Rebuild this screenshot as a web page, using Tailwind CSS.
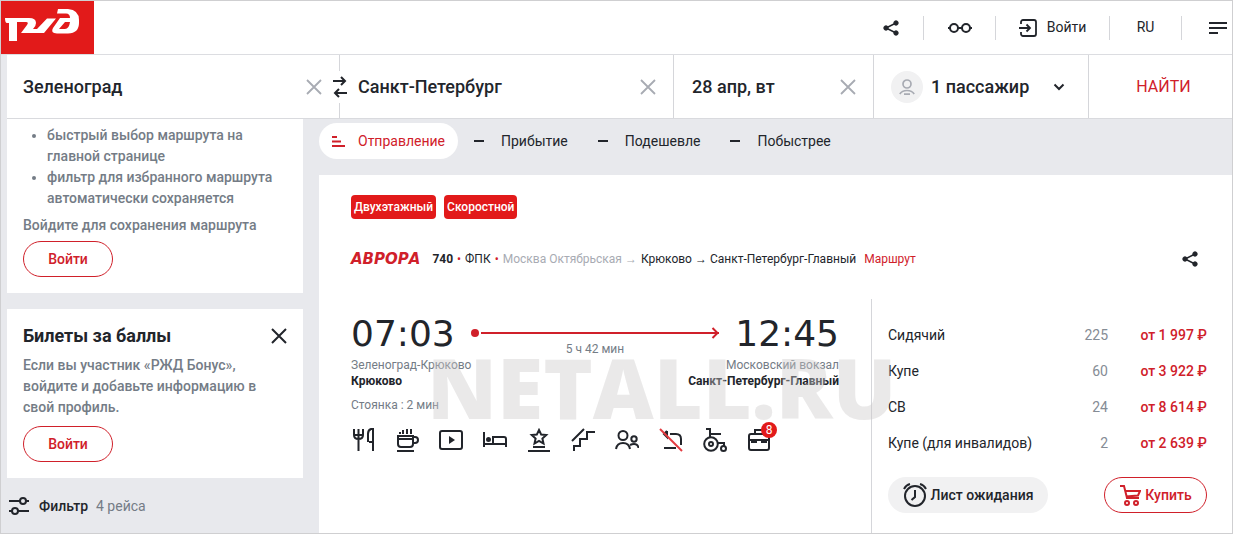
<!doctype html>
<html lang="ru">

<head>
  <meta charset="UTF-8" />
  <meta name="viewport" content="width=device-width, initial-scale=1.0" />
  <script src="https://cdn.jsdelivr.net/npm/@tailwindcss/browser@4"></script>
  <title>РЖД — билеты Зеленоград – Санкт-Петербург</title>
</head>

<body class="min-h-screen border border-[#cfcfd1] bg-[#e8e9ed] font-['Roboto','Noto_Sans',sans-serif] text-[14px] leading-[21px] text-[#22252b]">

  <!-- Header -->
  <header class="flex h-[54px] items-center justify-between border-b border-[#dcdde1] bg-white">
    <a href="#" aria-label="РЖД" class="block h-[53px] w-[93px] bg-[#e21a1a]">
      <svg class="h-[53px] w-[93px]" viewBox="0 0 93 53" fill="#fff" fill-rule="evenodd">
        <path d="M4 17H28Q35 17 35 22Q35 25 32 28H36L46 17.500H55L43 32H20L26 24Q28 21 25 21H16V40H8V22H6Q4 22 4 17Z" />
        <path d="M57 8H67Q78 9 78 19V22Q78 32 67 32.500H56Q49 32 52 27L59 17H69Q69 12.500 65 12.500H56ZM64 21 58 28H64Q68 28 69 21Z" />
      </svg>
    </a>
    <nav class="flex items-center divide-x divide-[#d5d6da]">
      <button type="button" aria-label="Поделиться" class="flex h-6 w-[66px] items-center justify-center">
        <svg class="size-4" viewBox="0 0 16 16" fill="#22252b" stroke="#22252b">
          <path d="M13 3 3 8l10 5" fill="none" stroke-width="1.500" />
          <circle cx="13" cy="3" r="2.200" /><circle cx="3" cy="8" r="2.200" /><circle cx="13" cy="13" r="2.200" />
        </svg>
      </button>
      <button type="button" aria-label="Версия для слабовидящих" class="flex h-6 w-[72px] items-center justify-center">
        <svg class="h-3 w-6" viewBox="0 0 24 12" fill="none" stroke="#22252b" stroke-width="2">
          <circle cx="6" cy="6" r="4" /><circle cx="18" cy="6" r="4" /><path d="M0 6h2M10 6h4M22 6h2" />
        </svg>
      </button>
      <a href="#" class="flex h-6 w-[114px] items-center justify-center gap-[10px]">
        <svg class="size-[18px]" viewBox="0 0 18 18" fill="none" stroke="#22252b" stroke-width="1.800">
          <path d="M2 5V3a2 2 0 0 1 2-2h11a2 2 0 0 1 2 2v12a2 2 0 0 1-2 2H4a2 2 0 0 1-2-2v-2M0 9h11M7.500 5.500 11 9l-3.500 3.500" />
        </svg>
        <span>Войти</span>
      </a>
      <button type="button" class="flex h-6 w-[72px] items-center justify-center">RU</button>
      <button type="button" aria-label="Меню" class="flex h-6 w-[50px] items-center justify-end pr-[5px]">
        <svg class="h-3 w-[18px]" viewBox="0 0 18 12" stroke="#22252b" stroke-width="2"><path d="M0 1h18M0 6h18M0 11h9" /></svg>
      </button>
    </nav>
  </header>

  <!-- Search -->
  <form class="ml-1.5 grid h-16 grid-cols-[minmax(0,333fr)_minmax(0,334fr)_minmax(0,200fr)_minmax(0,215fr)_minmax(0,143fr)] divide-x divide-[#d5d6da] border-b border-[#d9dade] bg-white text-[18px] font-medium">
    <div class="relative flex items-center justify-between pr-[17px] pl-4">
      <input type="text" aria-label="Откуда" value="Зеленоград" class="min-w-0 flex-1 outline-none" />
      <button type="button" aria-label="Очистить">
        <svg class="size-4" viewBox="0 0 16 16" stroke="#a8abb3" stroke-width="1.800"><path d="m1 1 14 14M15 1 1 15" /></svg>
      </button>
      <button type="button" aria-label="Поменять местами" class="absolute top-4 -right-[9px] flex h-8 w-4 items-center justify-center bg-white">
        <svg class="h-[22px] w-3.5" viewBox="0 0 14 22" fill="none" stroke="#22252b" stroke-width="2">
          <path d="M0 5h12M8 1l4 4-4 4M14 17H2M6 13l-4 4 4 4" />
        </svg>
      </button>
    </div>
    <div class="flex items-center justify-between pr-[17px] pl-[18px]">
      <input type="text" aria-label="Куда" value="Санкт-Петербург" class="min-w-0 flex-1 outline-none" />
      <button type="button" aria-label="Очистить">
        <svg class="size-4" viewBox="0 0 16 16" stroke="#a8abb3" stroke-width="1.800"><path d="m1 1 14 14M15 1 1 15" /></svg>
      </button>
    </div>
    <div class="flex items-center justify-between pr-[17px] pl-[18px]">
      <input type="text" aria-label="Дата" value="28 апр, вт" class="min-w-0 flex-1 outline-none" />
      <button type="button" aria-label="Очистить">
        <svg class="size-4" viewBox="0 0 16 16" stroke="#a8abb3" stroke-width="1.800"><path d="m1 1 14 14M15 1 1 15" /></svg>
      </button>
    </div>
    <button type="button" class="flex items-center pr-[23px] pl-[17px] whitespace-nowrap">
      <span class="mr-2 flex size-8 items-center justify-center rounded-full bg-[#f1f1f2]">
        <svg class="size-4" viewBox="0 0 16 16" fill="none" stroke="#a8abb3" stroke-width="1.700">
          <circle cx="8" cy="5" r="4" /><path d="M.8 15Q3 11.500 8 11.500T15.200 15M5 15.200h6" />
        </svg>
      </span>
      1 пассажир
      <svg class="ml-auto h-2 w-3" viewBox="0 0 12 8" fill="none" stroke="#22252b" stroke-width="2"><path d="m1.500 1.500 4.500 4.500 4.500-4.500" /></svg>
    </button>
    <button type="submit" class="pl-1.5 text-[16px] font-normal text-[#d0202a]">НАЙТИ</button>
  </form>

  <div class="flex gap-4 pl-1.5">

    <!-- Sidebar -->
    <aside class="w-[296px] shrink-0 font-medium text-[#747c86]">
      <section class="bg-white px-4 pt-1.5 pb-4">
        <ul class="list-disc pl-6">
          <li>быстрый выбор маршрута на главной странице</li>
          <li>фильтр для избранного маршрута автоматически сохраняется</li>
        </ul>
        <p class="mt-1.5">Войдите для сохранения маршрута</p>
        <button type="button" class="mt-[5px] block h-9 w-[90px] rounded-full border border-[#d0202a] text-[#d0202a]">Войти</button>
      </section>

      <section class="mt-4 bg-white px-4 pt-[15px] pb-4">
        <div class="flex items-center justify-between">
          <h2 class="text-[18px] leading-6 font-bold text-[#22252b]">Билеты за баллы</h2>
          <button type="button" aria-label="Закрыть">
            <svg class="size-4" viewBox="0 0 16 16" stroke="#22252b" stroke-width="2"><path d="m1 1 14 14M15 1 1 15" /></svg>
          </button>
        </div>
        <p class="mt-[7px]">Если вы участник «РЖД Бонус», войдите и добавьте информацию в свой профиль.</p>
        <button type="button" class="mt-2 block h-9 w-[90px] rounded-full border border-[#d0202a] text-[#d0202a]">Войти</button>
      </section>

      <button type="button" class="mt-4 ml-0.5 flex h-6 items-center gap-2">
        <svg class="h-[18px] w-5" viewBox="0 0 20 18" fill="none" stroke="#22252b" stroke-width="2">
          <path d="M0 4h11M17 4h3M0 14h3M9 14h11" /><circle cx="14" cy="4" r="3" /><circle cx="6" cy="14" r="3" />
        </svg>
        <span class="ml-0.5 text-[#22252b]">Фильтр</span>
        <span class="font-normal">4 рейса</span>
      </button>
    </aside>

    <main class="min-w-0 flex-1">
      <!-- Sorting -->
      <div class="flex h-14 items-start gap-[30px] pt-1">
        <button type="button" class="flex h-9 w-[139px] items-center gap-3 rounded-full bg-white pl-3 text-[#d0202a]">
          <svg class="h-[11px] w-[15px]" viewBox="0 0 15 11" stroke="#d0202a" stroke-width="2"><path d="M1 1h5M1 5.500h9M1 10h13" /></svg>
          Отправление
        </button>
        <button type="button" class="-ml-3.5 flex h-9 items-center gap-[17px]"><span class="h-0.5 w-2.5 bg-[#22252b]"></span>Прибытие</button>
        <button type="button" class="flex h-9 items-center gap-[17px]"><span class="h-0.5 w-2.5 bg-[#22252b]"></span>Подешевле</button>
        <button type="button" class="flex h-9 items-center gap-[17px]"><span class="h-0.5 w-2.5 bg-[#22252b]"></span>Побыстрее</button>
      </div>

      <!-- Train card -->
      <article class="relative min-h-[358px] bg-white pt-5">
        <div class="flex gap-2 pl-8 text-[12px] font-medium text-white">
          <span class="flex h-6 items-center rounded bg-[#e21a1a] px-[3px]">Двухэтажный</span>
          <span class="flex h-6 items-center rounded bg-[#e21a1a] px-[3px]">Скоростной</span>
        </div>

        <div class="mt-[30px] flex items-center pr-[34px] pl-8 text-[12px] leading-5">
          <span class="font-['DejaVu_Sans',sans-serif] text-[15px] font-bold text-[#d0202a] italic">АВРОРА</span>
          <div class="ml-3 flex gap-1">
            <b>740</b><span class="text-[#d0202a]">•</span><span>ФПК</span><span class="text-[#d0202a]">•</span>
            <span class="text-[#a8abb3]">Москва Октябрьская →</span>
            <span>Крюково → Санкт-Петербург-Главный</span>
            <a href="#" class="ml-1 text-[#d0202a]">Маршрут</a>
          </div>
          <button type="button" aria-label="Поделиться" class="ml-auto">
            <svg class="size-4" viewBox="0 0 16 16" fill="#22252b" stroke="#22252b">
              <path d="M13 3 3 8l10 5" fill="none" stroke-width="1.500" />
              <circle cx="13" cy="3" r="2.200" /><circle cx="3" cy="8" r="2.200" /><circle cx="13" cy="13" r="2.200" />
            </svg>
          </button>
        </div>

        <div class="mt-[30px] flex">
          <div class="min-w-0 flex-1 pt-[15px] pr-8 pl-8 text-[12px] leading-4">
            <div class="flex items-start">
              <time class="font-['DejaVu_Sans',sans-serif] text-[36px] leading-10">07:03</time>
              <div class="mx-4 mt-3 flex-1 text-center text-[#747c86]">
                <div class="flex h-3.5 items-center">
                  <span class="size-2 rounded-full bg-[#d0202a]"></span>
                  <span class="ml-0.5 h-0.5 flex-1 bg-[#d0202a]"></span>
                  <svg class="-ml-2 h-3 w-2" viewBox="0 0 8 12" fill="none" stroke="#d0202a" stroke-width="2"><path d="m1.500 1 5 5-5 5" /></svg>
                </div>
                <div class="mt-px">5 ч 42 мин</div>
              </div>
              <time class="font-['DejaVu_Sans',sans-serif] text-[36px] leading-10">12:45</time>
            </div>
            <div class="flex justify-between">
              <div>
                <div class="text-[#747c86]">Зеленоград-Крюково</div>
                <b>Крюково</b>
                <div class="mt-2 text-[#747c86]">Стоянка : 2 мин</div>
              </div>
              <div class="text-right">
                <div class="text-[#747c86]">Московский вокзал</div>
                <b>Санкт-Петербург-Главный</b>
              </div>
            </div>

            <!-- Services -->
            <ul class="mt-[15px] flex gap-5">
              <li><svg class="size-6" viewBox="0 0 24 24" fill="none" stroke="#22252b" stroke-width="2"><path d="M3 1v6q0 4 4.500 4T12 7V1M7.500 1v22M18 14h4M22 23V1h-2q-3 1-3 5v8M3 7h9" /></svg></li>
              <li><svg class="size-6" viewBox="0 0 24 24" fill="none" stroke="#22252b" stroke-width="2"><path d="M3 8h15v8q0 3-3 3H6q-3 0-3-3zM18 9h2q3 0 3 3t-3 3h-2M3 11h15M2 23h17M5 6V4M8 6V2M12 6V1M16 6V1" /></svg></li>
              <li><svg class="size-6" viewBox="0 0 24 24" fill="none" stroke="#22252b" stroke-width="2"><rect x="1" y="3" width="22" height="18" rx="2" /><path d="m10 8 6 4-6 4z" fill="#22252b" stroke="none" /></svg></li>
              <li><svg class="size-6" viewBox="0 0 24 24" fill="none" stroke="#22252b" stroke-width="2"><path d="M1 4v15M1 16h22v3M23 16v-5q0-2-2-2H10v7" /><circle cx="5.500" cy="11.500" r="1.500" fill="#22252b" /></svg></li>
              <li><svg class="size-6" viewBox="0 0 24 24" fill="none" stroke="#22252b" stroke-width="2"><path d="m12 2 2.200 4.600 5 .5-3.800 3.400 1.100 5L12 13l-4.500 2.500 1.100-5-3.800-3.400 5-.5zM6 19h12M1 23h22" /></svg></li>
              <li><svg class="size-6" viewBox="0 0 24 24" fill="none" stroke="#22252b" stroke-width="2"><path d="M1 13 13 1M3 23v-5h6v-7h7V4h8" /></svg></li>
              <li><svg class="size-6" viewBox="0 0 24 24" fill="none" stroke="#22252b" stroke-width="2"><circle cx="8" cy="7.500" r="4.500" /><circle cx="19" cy="11" r="2.700" /><path d="M1 21q1-6 7-6t7 6M15 17q2-1 4-1 4 0 4.500 4" /></svg></li>
              <li><svg class="size-6" viewBox="0 0 24 24" fill="none" stroke="#22252b" stroke-width="2"><path d="M5 20h12M11 6h6q5 0 5 5v6M8 3 5 6l3 3V3" /><path d="m1 1 22 22" stroke="#e33b40" /></svg></li>
              <li><svg class="size-6" viewBox="0 0 24 24" fill="none" stroke="#22252b" stroke-width="2"><circle cx="8" cy="16" r="6.800" /><circle cx="8" cy="16" r="2" /><circle cx="20.500" cy="20.500" r="2.500" /><path d="M3 1h4v8M7 6h11M15 15h6v3" /></svg></li>
              <li class="relative">
                <svg class="size-6" viewBox="0 0 24 24" fill="none" stroke="#22252b" stroke-width="2"><rect x="2" y="6" width="20" height="16" rx="2" /><path d="M8 6V2h9v4M2 12h20M5 12v2h4v-2M15 12v2h4v-2" /></svg>
                <span class="absolute -top-1.5 left-3.5 size-4 rounded-full bg-[#e21a1a] text-center text-white">8</span>
              </li>
            </ul>
          </div>

          <!-- Prices -->
          <div class="w-[361px] border-l border-[#d5d6da] pt-[18px] pr-[25px] pl-4 pb-5">
            <table class="w-full">
              <tr class="h-9"><td>Сидячий</td><td class="text-right text-[#858c95]">225</td><td class="w-[99px] text-right font-medium text-[#d0202a]">от 1 997 ₽</td></tr>
              <tr class="h-9"><td>Купе</td><td class="text-right text-[#858c95]">60</td><td class="text-right font-medium text-[#d0202a]">от 3 922 ₽</td></tr>
              <tr class="h-9"><td>СВ</td><td class="text-right text-[#858c95]">24</td><td class="text-right font-medium text-[#d0202a]">от 8 614 ₽</td></tr>
              <tr class="h-9"><td>Купе (для инвалидов)</td><td class="text-right text-[#858c95]">2</td><td class="text-right font-medium text-[#d0202a]">от 2 639 ₽</td></tr>
            </table>
            <div class="mt-4 flex justify-between font-medium">
              <button type="button" class="flex h-9 w-40 items-center justify-center gap-1 rounded-full bg-[#f1f1f2]">
                <svg class="size-6" viewBox="0 0 24 24" fill="none" stroke="#22252b" stroke-width="2"><circle cx="12" cy="13" r="10" /><path d="M12 7v7l-3.500 3M1 6q2-4 6-5M23 6q-2-4-6-5" /></svg>
                Лист ожидания
              </button>
              <button type="button" class="flex h-9 w-[103px] items-center justify-center gap-1 rounded-full border border-[#d0202a] text-[#d0202a]">
                <svg class="size-[22px]" viewBox="0 0 22 22" fill="none" stroke="#d0202a" stroke-width="2"><path d="M1 2h4l3 12h12M6 7h15l-2 4.500-12 1" /><circle cx="8" cy="19" r="2" /><circle cx="17" cy="19" r="2" /></svg>
                Купить
              </button>
            </div>
          </div>
        </div>

        <!-- Watermark -->
        <div class="pointer-events-none absolute top-[182px] left-[108px] font-['Open_Sans',sans-serif] text-[84px] leading-[60px] font-extrabold text-[#cac7c9]/40">NETALL.RU</div>
      </article>
    </main>
  </div>

</body>

</html>
